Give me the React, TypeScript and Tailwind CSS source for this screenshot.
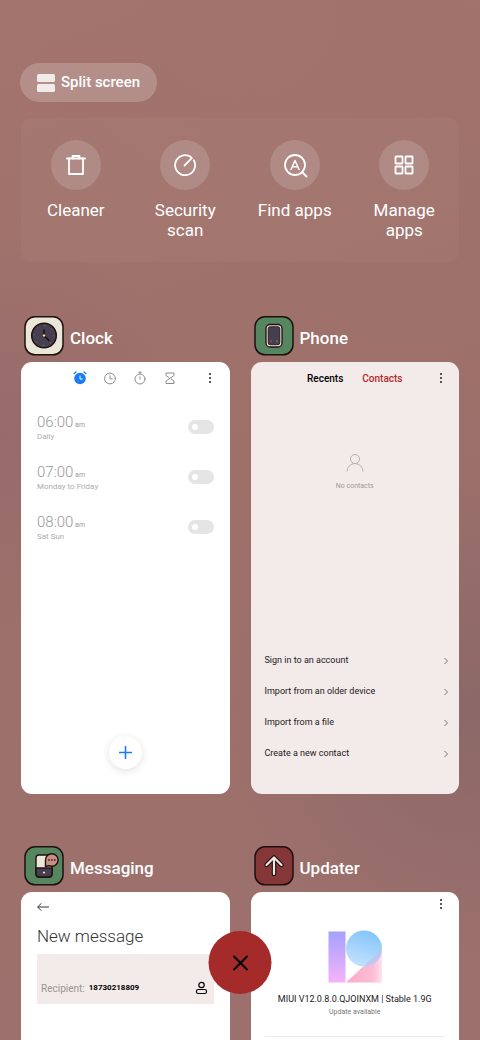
import type { ReactNode } from 'react';

const SHORTCUTS = [
  {
    label: 'Cleaner',
    icon: (
      <>
        <path d="M2 4.500h18" />
        <path d="M7.500 4.500V2h7v2.500" />
        <path d="M4 4.500V20h14V4.500" />
      </>
    ),
  },
  {
    label: 'Security scan',
    icon: (
      <>
        <path d="M19.800 6.200A10 10 0 1 1 16.900 3" />
        <path d="M10.500 11.500L17.800 4.200" />
      </>
    ),
  },
  {
    label: 'Find apps',
    icon: (
      <>
        <circle cx="11" cy="11" r="10" />
        <path d="M18 18l4.500 4.500" />
        <path d="M7 15.500L11 6.500l4 9M8.500 12.800h5" strokeWidth="1.500" />
      </>
    ),
  },
  {
    label: 'Manage apps',
    icon: (
      <>
        <rect x="2.500" y="2.500" width="7" height="7" rx="0.500" />
        <rect x="12.500" y="2.500" width="7" height="7" rx="0.500" />
        <rect x="2.500" y="12.500" width="7" height="7" rx="0.500" />
        <rect x="12.500" y="12.500" width="7" height="7" rx="0.500" />
      </>
    ),
  },
];

const ALARMS = [
  { time: '06:00', repeat: 'Daily' },
  { time: '07:00', repeat: 'Monday to Friday' },
  { time: '08:00', repeat: 'Sat Sun' },
];

const CONTACT_ACTIONS = [
  'Sign in to an account',
  'Import from an older device',
  'Import from a file',
  'Create a new contact',
];

function MoreButton() {
  return (
    <button aria-label="More" className="justify-self-end">
      <svg className="w-4 h-4" viewBox="0 0 16 16" fill="#222">
        <circle cx="8" cy="4" r="1" />
        <circle cx="8" cy="8" r="1" />
        <circle cx="8" cy="12" r="1" />
      </svg>
    </button>
  );
}

function ClockIcon() {
  return (
    <svg className="w-10 h-10" viewBox="0 0 40 40">
      <rect x="1" y="0.800" width="38" height="38" rx="10" fill="#ebe7d8" stroke="#1f1010" strokeWidth="1.500" />
      <circle cx="20" cy="19.500" r="12.300" fill="#463f50" stroke="#1f1010" strokeWidth="1.500" />
      <circle cx="20" cy="19.500" r="10" fill="none" stroke="#857d8c" strokeWidth="1" strokeDasharray="1 6.850" />
      <path d="M20 14v5.500l5 5" fill="none" stroke="#1f1010" strokeWidth="1.700" strokeLinecap="round" />
      <circle cx="20" cy="19.500" r="1.700" fill="#f1dfc9" stroke="#1f1010" strokeWidth="0.800" />
    </svg>
  );
}

function PhoneIcon() {
  return (
    <svg className="w-10 h-10" viewBox="0 0 40 40">
      <rect x="1" y="0.800" width="38" height="38" rx="10" fill="#568660" stroke="#1f1010" strokeWidth="1.500" />
      <rect x="12" y="8.500" width="16" height="22.500" rx="4" fill="#e9d9d6" stroke="#1f1010" strokeWidth="1.300" />
      <rect x="14.200" y="10.700" width="11.600" height="18" rx="2" fill="#463f50" stroke="#1f1010" strokeWidth="0.800" />
      <circle cx="17.200" cy="25.200" r="1" fill="#a24345" />
      <circle cx="22.800" cy="25.200" r="1" fill="#568660" />
    </svg>
  );
}

function MessagingIcon() {
  return (
    <svg className="w-10 h-10" viewBox="0 0 40 40" stroke="#1f1010" strokeWidth="1.400">
      <rect x="1" y="0.800" width="38" height="38" rx="10" fill="#568660" strokeWidth="1.500" />
      <rect x="12" y="9" width="16" height="22" rx="3" fill="#ebe7d8" />
      <path d="M12 22h16v6a3 3 0 0 1-3 3H15a3 3 0 0 1-3-3z" fill="#463f50" />
      <circle cx="20" cy="26.500" r="1.500" fill="#f1dfc9" strokeWidth="0.600" />
      <path d="M21.500 20.500v-6.500a6.300 6.300 0 1 1 6.300 6.300l-3-.500z" fill="#c98f85" strokeLinejoin="round" />
      <path d="M24.300 14h7.200" strokeDasharray="1.400 1.500" />
    </svg>
  );
}

function UpdaterIcon() {
  return (
    <svg className="w-10 h-10" viewBox="0 0 40 40" fill="none" strokeLinecap="round" strokeLinejoin="round">
      <rect x="1" y="0.800" width="38" height="38" rx="10" fill="#853737" stroke="#1f1010" strokeWidth="1.500" />
      <path d="M20 28V12M12.500 19L20 11.500l7.500 7.500" stroke="#1f1010" strokeWidth="4.500" />
      <path d="M20 28V12M12.500 19L20 11.500l7.500 7.500" stroke="#f1e6df" strokeWidth="2.200" />
    </svg>
  );
}

function AppWindow({ name, icon, tone, children }: { name: string; icon: ReactNode; tone: string; children: ReactNode }) {
  return (
    <section>
      <header className="flex h-[46px] gap-[6px] pl-[3px]">
        {icon}
        <h2 className="text-[17px] leading-[44px] font-medium text-white">{name}</h2>
      </header>
      <div className={`flex h-[432px] flex-col overflow-hidden rounded-[11px] ${tone}`}>{children}</div>
    </section>
  );
}

function ClockScreen() {
  return (
    <>
      <div className="grid h-8 grid-cols-[1fr_auto_1fr] items-center px-3">
        <div className="col-start-2 flex gap-4">
          <button aria-label="Alarm">
            <svg className="w-[14px] h-[14px]" viewBox="0 0 14 14" fill="none" strokeLinecap="round">
              <circle cx="7" cy="7.500" r="5.800" fill="#1a7df5" />
              <path d="M1 2.700L3 1M13 2.700L11 1" stroke="#1a7df5" strokeWidth="1.200" />
              <path d="M7 5v3h2.300" stroke="#fff" />
            </svg>
          </button>
          <button aria-label="World clock">
            <svg className="w-[14px] h-[14px]" viewBox="0 0 14 14" fill="none" stroke="#8d8d8d" strokeLinecap="round">
              <circle cx="7" cy="7.500" r="5.400" />
              <path d="M7 4.800v3h2.300" />
            </svg>
          </button>
          <button aria-label="Stopwatch">
            <svg className="w-[14px] h-[14px]" viewBox="0 0 14 14" fill="none" stroke="#8d8d8d" strokeLinecap="round">
              <circle cx="7" cy="8" r="5" />
              <path d="M5.800 1.200h2.400M7 1.200V3M7 5.800v2.200" />
            </svg>
          </button>
          <button aria-label="Timer">
            <svg className="w-[14px] h-[14px]" viewBox="0 0 14 14" fill="none" stroke="#8d8d8d" strokeLinejoin="round">
              <path d="M3 2h8v2.500L3 10v2.500h8V10L7.800 7.700M6.200 6.700L3 4.500V2" />
            </svg>
          </button>
        </div>
        <MoreButton />
      </div>
      <ul className="mt-2 px-4 text-[#adadad]">
        {ALARMS.map((alarm) => (
          <li key={alarm.time}>
            <label className="flex h-[50px] items-center justify-between">
              <span>
                <span className="block text-[15px] leading-4 font-light text-[#999]">
                  {alarm.time} <span className="-ml-0.5 text-[7px] font-normal">am</span>
                </span>
                <span className="block text-[8px] leading-2">{alarm.repeat}</span>
              </span>
              <input type="checkbox" className="peer sr-only" />
              <span className="flex h-[14px] w-[26px] items-center rounded-full bg-[#e5e5e5] px-1 peer-checked:justify-end peer-checked:bg-[#1a7df5]">
                <span className="size-[6px] rounded-full bg-white" />
              </span>
            </label>
          </li>
        ))}
      </ul>
      <button
        aria-label="Add alarm"
        className="mt-auto mb-[25px] flex size-[33px] items-center justify-center self-center rounded-full bg-white shadow-[0_2px_8px_rgba(0,0,0,0.12)]"
      >
        <svg className="w-[13px] h-[13px]" viewBox="0 0 13 13" stroke="#1a7df5" strokeWidth="1.600">
          <path d="M6.500 0v13M0 6.500h13" />
        </svg>
      </button>
    </>
  );
}

function PhoneScreen() {
  return (
    <>
      <div className="grid h-8 grid-cols-[1fr_auto_1fr] items-center px-[10px]">
        <div className="col-start-2 flex gap-[19px] text-[10px] font-medium">
          <button className="text-black">Recents</button>
          <button className="text-[#b02a2c]">Contacts</button>
        </div>
        <MoreButton />
      </div>
      <div className="mt-[59px] flex flex-col items-center text-[7px] text-[#a09a99]">
        <svg className="w-5 h-5" viewBox="0 0 20 20" fill="none" stroke="#b9b1b0">
          <circle cx="10" cy="6" r="4.500" />
          <path d="M2 18.500a8 8 0 0 1 16 0" />
        </svg>
        <p className="mt-2 leading-[10px]">No contacts</p>
      </div>
      <ul className="mt-auto mb-[25px] pr-[9px] pl-[14px] text-[9px] text-[#1c1a1a]">
        {CONTACT_ACTIONS.map((action) => (
          <li key={action}>
            <button className="flex h-[31px] w-full items-center justify-between">
              {action}
              <svg className="w-2 h-2" viewBox="0 0 8 8" fill="none" stroke="#777">
                <path d="M2.500 1l3 3-3 3" />
              </svg>
            </button>
          </li>
        ))}
      </ul>
    </>
  );
}

function MessageScreen() {
  return (
    <div className="px-4">
      <button aria-label="Back" className="flex h-[30px] items-center">
        <svg className="w-3 h-3" viewBox="0 0 12 12" fill="none" stroke="#333">
          <path d="M12 6H.700M4.300 2.300L.700 6l3.600 3.700" />
        </svg>
      </button>
      <h3 className="text-[17px] leading-7 font-light text-[#333]">New message</h3>
      <div className="mt-1 flex h-[50px] items-end justify-between bg-[#f3ebe9] px-1 pb-2">
        <label className="flex h-4 items-center gap-1 text-[10px] text-[#9b9492]">
          Recipient:
          <input
            className="w-24 text-[8px] leading-4 font-bold text-black outline-none"
            defaultValue="18730218809"
            inputMode="tel"
          />
        </label>
        <button aria-label="Choose contact">
          <svg className="w-4 h-4" viewBox="0 0 16 16" fill="none" stroke="#000" strokeWidth="1.200">
            <circle cx="7.500" cy="5" r="2.700" />
            <rect x="2.500" y="9.500" width="10" height="4" rx="1.800" />
          </svg>
        </button>
      </div>
    </div>
  );
}

function UpdaterScreen() {
  return (
    <>
      <div className="flex h-6 items-center justify-end pr-[10px]">
        <MoreButton />
      </div>
      <div className="mt-[14px] flex flex-col items-center">
        <svg className="w-[54px] h-[54px]" viewBox="0 0 54 54">
          <defs>
            <linearGradient id="bar" x1="0" y1="0" x2="0" y2="1">
              <stop offset="0" stopColor="#a5a1ff" />
              <stop offset="1" stopColor="#f5b3fb" />
            </linearGradient>
            <linearGradient id="ball" x1="0.700" y1="0" x2="0.400" y2="1">
              <stop offset="0" stopColor="#82c4fb" />
              <stop offset="1" stopColor="#c3e1fd" />
            </linearGradient>
            <linearGradient id="base" x1="0" y1="0" x2="1" y2="0">
              <stop offset="0" stopColor="#fbaacb" />
              <stop offset="0.750" stopColor="#fdbcd5" />
              <stop offset="1" stopColor="#fde3ee" />
            </linearGradient>
            <clipPath id="ballClip">
              <circle cx="36" cy="18.500" r="18" />
            </clipPath>
          </defs>
          <path d="M0.500 1.500H17.500V52.500H0.500z" fill="url(#bar)" />
          <path d="M18 52.500L54 19V52.500z" fill="url(#base)" />
          <circle cx="36" cy="18.500" r="18" fill="url(#ball)" />
          <path d="M18 52.500L54 19V52.500z" fill="#c9b9e8" opacity="0.600" clipPath="url(#ballClip)" />
        </svg>
        <h3 className="mt-[9px] text-[9px] leading-3 text-[#222]">MIUI V12.0.8.0.QJOINXM | Stable 1.9G</h3>
        <p className="mt-0.5 text-[7px] leading-[10px] text-[#777]">Update available</p>
      </div>
      <hr className="mx-[14px] mt-[19px] border-[#ececec]" />
    </>
  );
}

function App() {
  return (
    <div className="relative h-screen overflow-hidden bg-[#9d706b] bg-[radial-gradient(circle_at_0%_42%,#966b6b_0%,transparent_26%),radial-gradient(circle_at_100%_68%,#8b6868_0%,transparent_30%),radial-gradient(circle_at_50%_0%,#a2726c_0%,transparent_30%),linear-gradient(160deg,#a3746d_0%,#9d706a_45%,#9c706d_100%)] font-['Roboto',sans-serif]">
      <main className="px-[21px] pt-[63px]">
        <button className="-ml-px flex h-[39px] items-center gap-[6px] rounded-full bg-white/20 px-[17px] text-[15px] font-medium text-white">
          <svg className="w-[18px] h-[18px]" viewBox="0 0 18 18" fill="#f1eae9">
            <rect width="18" height="8" rx="1.500" />
            <rect y="10" width="18" height="8" rx="1.500" />
          </svg>
          Split screen
        </button>

        <nav className="mt-4 grid grid-cols-4 rounded-[10px] bg-white/[0.03] py-[22px]">
          {SHORTCUTS.map(({ label, icon }) => (
            <button key={label} className="flex flex-col items-center px-3 text-[17px] leading-5 text-white">
              <span className="mb-[10px] flex size-[50px] items-center justify-center rounded-full bg-white/15">
                <svg
                  className="w-[22px] h-[22px] overflow-visible"
                  viewBox="0 0 22 22"
                  fill="none"
                  stroke="#fff"
                  strokeWidth="1.800"
                  strokeLinecap="round"
                  strokeLinejoin="round"
                >
                  {icon}
                </svg>
              </span>
              {label}
            </button>
          ))}
        </nav>

        <div className="mt-[54px] grid grid-cols-2 gap-x-[21px] gap-y-[52px]">
          <AppWindow name="Clock" icon={<ClockIcon />} tone="bg-white">
            <ClockScreen />
          </AppWindow>
          <AppWindow name="Phone" icon={<PhoneIcon />} tone="bg-[#f3ebe9]">
            <PhoneScreen />
          </AppWindow>
          <AppWindow name="Messaging" icon={<MessagingIcon />} tone="bg-white">
            <MessageScreen />
          </AppWindow>
          <AppWindow name="Updater" icon={<UpdaterIcon />} tone="bg-white">
            <UpdaterScreen />
          </AppWindow>
        </div>
      </main>

      {/* Close all, floats over the windows */}
      <button
        aria-label="Close all"
        className="absolute bottom-[46px] left-1/2 flex size-[63px] -translate-x-1/2 items-center justify-center rounded-full bg-[#a52a2a]"
      >
        <svg className="w-4 h-4" viewBox="0 0 16 16" fill="none" stroke="#000" strokeWidth="2" strokeLinecap="round">
          <path d="M1.500 1.500l13 13M14.500 1.500l-13 13" />
        </svg>
      </button>
    </div>
  );
}

export default App;
